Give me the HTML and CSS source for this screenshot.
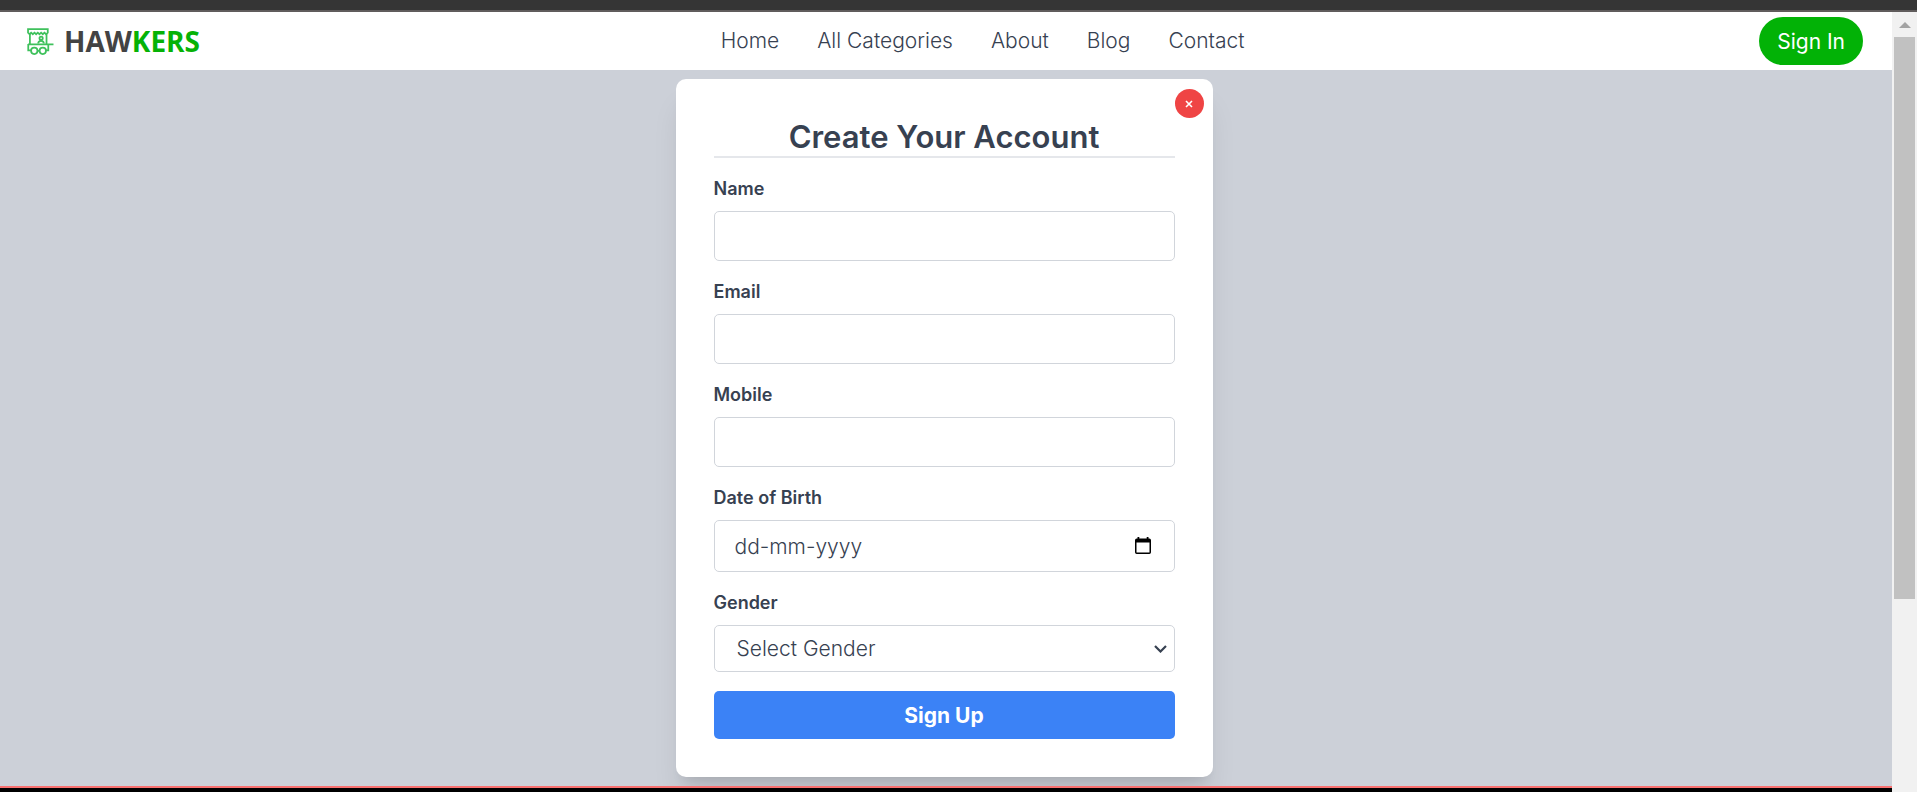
FILE: index.html
```html
<!DOCTYPE html>
<html lang="en">
<head>
<meta charset="utf-8">
<meta name="viewport" content="width=device-width, initial-scale=1">
<title>Hawkers - Sign Up</title>
<link rel="stylesheet" href="styles.css">
</head>
<body>
<div class="topbar"></div>
<div class="viewport">
  <div class="page">
    <header class="header">
      <a class="logo" href="#">
        <svg class="logo-icon" viewBox="0 0 26 26" fill="none" stroke="#3fc15c" stroke-width="1.700" aria-hidden="true">
          <path d="M1 1h19v3.500l-1.600 1.500L16.800 4.500l-1.600 1.500L13.600 4.500l-1.600 1.500L10.400 4.500 8.800 6 7.200 4.500 5.600 6 4 4.500 2.500 6 1 4.500z"/>
          <path d="M2.800 5.500v10M18.800 5.500v10M1 15.700h24.500M1.200 15.500v6H4M20.500 15.500v6h-2.500"/>
          <circle cx="7" cy="22" r="3.100"/><circle cx="15.200" cy="22" r="3.100"/>
          <path d="M10 22h2M10.800 15c0-3.500 5.400-3.500 5.400 0"/><circle cx="13.600" cy="9.800" r="1.600"/>
        </svg>
        <span class="logo-text">HAW<span class="logo-accent">KERS</span></span>
      </a>
      <nav class="nav">
        <a href="#">Home</a>
        <a href="#">All Categories</a>
        <a href="#">About</a>
        <a href="#">Blog</a>
        <a href="#">Contact</a>
      </nav>
      <button class="signin" type="button">Sign In</button>
    </header>
    <main class="main">
      <form class="card">
        <button class="close" type="button" aria-label="Close">
          <svg viewBox="0 0 8 8" width="8" height="8" stroke="#fff" stroke-width="1.600" aria-hidden="true"><path d="M1 1l6 6M7 1L1 7"/></svg>
        </button>
        <h1 class="title">Create Your Account</h1>
        <div class="field">
          <label for="name">Name</label>
          <input class="control" id="name" type="text">
        </div>
        <div class="field">
          <label for="email">Email</label>
          <input class="control" id="email" type="email">
        </div>
        <div class="field">
          <label for="mobile">Mobile</label>
          <input class="control" id="mobile" type="tel">
        </div>
        <div class="field">
          <label for="dob">Date of Birth</label>
          <div class="control-wrap">
            <input class="control control-date" id="dob" type="text" placeholder="dd-mm-yyyy">
            <button class="calendar" type="button" aria-label="Open calendar">
              <svg viewBox="0 0 16 17" width="16" height="17" aria-hidden="true"><path fill="#000" fill-rule="evenodd" d="M2.500 0h1.800v1.500h7.400V0h1.800v1.500h.8A1.700 1.700 0 0 1 16 3.200v12.100a1.700 1.700 0 0 1-1.700 1.700H1.700A1.700 1.700 0 0 1 0 15.300V3.200a1.700 1.700 0 0 1 1.700-1.700h.8zM1.500 5.500v10h13v-10z"/></svg>
            </button>
          </div>
        </div>
        <div class="field">
          <label for="gender">Gender</label>
          <div class="control-wrap">
            <select class="control control-select" id="gender">
              <option>Select Gender</option>
            </select>
            <svg class="chevron" viewBox="0 0 13 8" width="13" height="8" fill="none" stroke="#374151" stroke-width="2.200" aria-hidden="true"><path d="M1 1l5.500 5.500L12 1"/></svg>
          </div>
        </div>
        <button class="submit" type="submit">Sign Up</button>
      </form>
    </main>
    <footer class="footer"></footer>
  </div>
  <div class="scrollbar" aria-hidden="true">
    <svg class="scroll-arrow" viewBox="0 0 12 6" width="12" height="6"><path d="M0 6l6-6 6 6z" fill="#a3a3a3"/></svg>
    <div class="scroll-thumb"></div>
  </div>
</div>
</body>
</html>
```
FILE: styles.css
```css
* { box-sizing: border-box; }

body {
  margin: 0;
  height: 100vh;
  display: flex;
  flex-direction: column;
  overflow: hidden;
  font-family: Inter, "Open Sans", sans-serif;
  font-size: 21px;
  font-weight: 300;
  color: #374151;
}

button, input, select { font: inherit; color: inherit; margin: 0; }
button { border: 0; padding: 0; cursor: pointer; }
svg { display: block; }

.topbar {
  flex: none;
  height: 12px;
  background: #353535;
  border-bottom: 2px solid #605c5c;
}

.viewport { flex: 1; min-height: 0; display: flex; }

.page {
  flex: 1;
  min-width: 0;
  display: flex;
  flex-direction: column;
  overflow: hidden;
}

.header {
  flex: none;
  display: flex;
  align-items: center;
  justify-content: space-between;
  padding: 5px 29px 5px 27px;
  background: #fff;
}

.logo {
  display: flex;
  align-items: center;
  gap: 10px;
  padding-right: 6px;
  text-decoration: none;
}
.logo-icon { width: 27px; height: 27px; }
.logo-text {
  font-family: "Open Sans", sans-serif;
  font-size: 28px;
  font-weight: 700;
  line-height: 38px;
  color: #434343;
}
.logo-accent { color: #06b206; }

.nav { display: flex; gap: 38px; }
.nav a { color: inherit; text-decoration: none; line-height: 28px; }

.signin {
  height: 48px;
  padding: 0 18px;
  border-radius: 24px;
  background: #02b206;
  color: #fff;
  font-weight: 400;
}

.main {
  flex: none;
  display: flex;
  justify-content: center;
  padding: 9px 4px 9px 0;
  background: #ccd0d8;
}

.card {
  position: relative;
  width: 100%;
  max-width: 537px;
  display: flex;
  flex-direction: column;
  gap: 19px;
  padding: 38px;
  border-radius: 10px;
  background: #fff;
  box-shadow: 0 24px 30px -6px rgba(0, 0, 0, 0.1), 0 10px 12px -7px rgba(0, 0, 0, 0.1);
}

.close {
  position: absolute;
  top: 10px;
  right: 9px;
  width: 29px;
  height: 29px;
  display: grid;
  place-items: center;
  border-radius: 50%;
  background: #ef4444;
}

.title {
  margin: 0;
  border-bottom: 2px solid #e5e7eb;
  font-size: 31px;
  font-weight: 600;
  line-height: 39px;
  text-align: center;
}

.field { display: flex; flex-direction: column; gap: 10px; }
.field label { font-size: 18px; font-weight: 600; line-height: 24px; }

.control-wrap { position: relative; }

.control {
  display: block;
  width: 100%;
  height: 50px;
  padding: 0 20px;
  border: 1px solid #d1d5db;
  border-radius: 5px;
  background: #fff;
}
.control::placeholder { color: #374151; opacity: 1; }
.control-date { height: 52px; }
.control-select { height: 47px; padding: 0 22px; appearance: none; }

.calendar {
  position: absolute;
  top: 17px;
  right: 24px;
  background: none;
}
.chevron {
  position: absolute;
  top: 20px;
  right: 8px;
  pointer-events: none;
}

.submit {
  height: 48px;
  border-radius: 5px;
  background: #3b82f6;
  color: #fff;
  font-weight: 700;
}

.footer {
  position: relative;
  flex: 1;
  border-top: 2px solid #f87171;
  background: #000;
}

.scrollbar {
  flex: none;
  width: 25px;
  padding: 10px 2px 0;
  background: #f1f1f1;
}
.scroll-arrow { margin: 0 auto 9px; }
.scroll-thumb { height: 73%; background: #c1c1c1; }
```
